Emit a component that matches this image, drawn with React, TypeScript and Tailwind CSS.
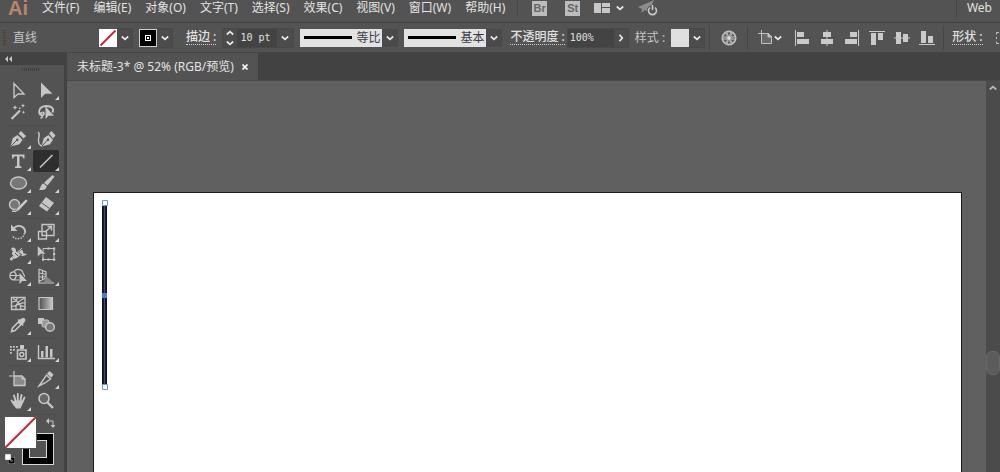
import type { ReactNode } from "react";

interface Tool {
  name: string;
  icon: ReactNode;
  more?: boolean;
  active?: boolean;
}

const menus = [
  "文件(F)",
  "编辑(E)",
  "对象(O)",
  "文字(T)",
  "选择(S)",
  "效果(C)",
  "视图(V)",
  "窗口(W)",
  "帮助(H)",
];

const line = { fill: "none", stroke: "currentColor", strokeWidth: 1.4 };

// Toolbox, top to bottom, grouped the way the separators split it
const toolGroups: Tool[][] = [
  [
    { name: "选择", icon: <path {...line} d="M6 3.5V17.500l4-3.500h6z" /> },
    { name: "直接选择", more: true, icon: <path d="M5 2.5V18l4.2-4.2h7.3z" /> },
    {
      name: "魔棒",
      icon: (
        <>
          <path d="M3.5 17L12 8.5" fill="none" stroke="currentColor" strokeWidth="2.2" />
          <path d="M7 3l.7 1.8 1.8.7-1.8.7L7 8l-.7-1.8-1.8-.7 1.8-.7zM15 1.500l.6 1.600 1.600.6-1.600.6-.6 1.600-.6-1.600-1.600-.6 1.600-.6zM15.500 8.500l.5 1.300 1.300.5-1.300.5-.5 1.300-.5-1.300-1.300-.5 1.300-.5zM11 5.500h1.500V7H11z" />
        </>
      ),
    },
    {
      name: "套索",
      icon: (
        <>
          <path {...line} strokeWidth={1.8} d="M6 13.500C1.500 12 2 4.500 10 4c6 0 8.500 3 6.500 6.500M6.500 10.500c-2 0-2.500 2.500-.5 2.800 2 0 2.500-2.300 1-3.300M6 13c1 2-.5 3-1.500 3" />
          <path d="M9.500 4.500V17l3-3.300h5.500z" />
        </>
      ),
    },
  ],
  [
    {
      name: "钢笔",
      more: true,
      icon: (
        <>
          <path d="M2.500 17.500l2.300-8.500 4.700-3 5 4.800-3 4.500zM10.500 4.500L13 2l5 5-2.500 2.500z" />
          <path d="M3 17L9 11" stroke="#535353" />
          <circle cx="9.300" cy="10.800" r="1.200" fill="#535353" />
        </>
      ),
    },
    {
      name: "曲率",
      icon: (
        <>
          <path d="M5.500 17.500l2.300-8.500 4.700-3 4.500 4.800-3 4.500zM13 4.500L15.500 2l4 4.500L17 9.500z" />
          <path {...line} d="M2 3c3 2 0 5 .5 9 .3 3 1.500 4.500 3.500 5" />
          <path d="M6 17L11.500 11" stroke="#535353" />
          <circle cx="12" cy="10.800" r="1.200" fill="#535353" />
        </>
      ),
    },
    {
      name: "文字",
      more: true,
      icon: <path d="M4 3.500h12.500V7.500H15.300C15 6 14.300 5.300 12.800 5.300H11.500V14c0 1.200.5 1.500 2 1.500V17H7v-1.500c1.500 0 2-.3 2-1.500V5.300H7.700C6.200 5.300 5.500 6 5.200 7.500H4z" />,
    },
    {
      name: "直线段",
      more: true,
      active: true,
      icon: <path {...line} strokeWidth={1.6} d="M4 16.500L16.500 4" />,
    },
    {
      name: "椭圆",
      more: true,
      icon: <ellipse cx="10.500" cy="10" rx="8" ry="6" fill="#777" stroke="currentColor" strokeWidth="1.400" />,
    },
    {
      name: "画笔",
      more: true,
      icon: (
        <>
          <path d="M16.500 2l2 1.800-7 8.700-3.500-2.800z" />
          <path d="M7.500 10.500l3.300 2.800c-.5 3.700-4.300 4.400-8 3.400 2-1 1.700-5.700 4.700-6.200z" />
        </>
      ),
    },
    {
      name: "Shaper",
      more: true,
      icon: (
        <>
          <circle cx="6.500" cy="9.500" r="5" fill="#777" stroke="currentColor" strokeWidth="1.400" />
          <path d="M18 4l2 2-9 9.500-4 2 1.600-4.300z" stroke="#535353" strokeWidth=".6" />
          <path {...line} d="M4 16.300h4" />
        </>
      ),
    },
    {
      name: "橡皮擦",
      more: true,
      icon: (
        <>
          <path d="M10 2l8 6-7 8.500L3 11z" />
          <path d="M6 8l7.500 5.500" stroke="#535353" />
        </>
      ),
    },
  ],
  [
    {
      name: "旋转",
      more: true,
      icon: (
        <>
          <path d="M3 2.500V9h6.500z" />
          <path {...line} strokeWidth={1.8} d="M6 6c5-4.500 12-1 11 5" />
          <path {...line} strokeWidth={1.600} strokeDasharray="1.500 1.200" d="M16.500 11c-.5 6-9 8-12.500 2.500" />
        </>
      ),
    },
    {
      name: "比例缩放",
      more: true,
      icon: (
        <>
          <path {...line} d="M6 2.500h12v11H6zM2.500 9.500h8v7.500h-8z" />
          <path {...line} d="M10 9l5-4M11.500 4.500h4v4" />
        </>
      ),
    },
    {
      name: "宽度",
      more: true,
      icon: (
        <>
          <path d="M3 5c2-3 5-1 5 1.500 0 2 2 3 4 .5 1-1.500 3-1 3 .5 0 2 1.500 2.500 4 2-2 3-5 3-7 1.500-2 3-5 4.500-8 3.500l2-3C4 11 3 9.500 5 7.500z" />
          <path {...line} strokeWidth={1} d="M2 15L14 4" />
          <circle cx="3.500" cy="15" r="1.500" />
          <path d="M7 9l3 3M11 9l3 2" stroke="#535353" />
        </>
      ),
    },
    {
      name: "自由变换",
      icon: (
        <>
          <path {...line} strokeWidth={1} d="M7 4.500h11v11H7z" />
          <path d="M17 3.500h2.200v2.200H17zM17 14.500h2.200v2.200H17zM6 14.500h2.200v2.200H6zM11.500 3.500h2v2h-2zM11.500 14.500h2v2h-2zM17 9h2.200v2H17z" />
          <path d="M1.500 1.500v11.500l3.300-3h5z" stroke="#535353" strokeWidth=".5" />
        </>
      ),
    },
    {
      name: "形状生成器",
      more: true,
      icon: (
        <>
          <path {...line} strokeWidth={1.200} d="M5 14C0 12 1.500 5.500 6 6c2-4 9-3 9 1.500 1.500 1 1.500 2 1.500 3.500M6 6c3 1 3 7-1 8h6M2.500 9.500h9" />
          <path d="M11.500 7v11l2.800-3h4.700z" />
        </>
      ),
    },
    {
      name: "透视网格",
      more: true,
      icon: (
        <>
          <path {...line} strokeWidth={1.200} d="M3 3v14h15M3 3l7 3v6L3 15.500M6.500 4.500V14M3 7l7 1.500M3 11l7-.5" />
          <path d="M10 10l7 6H8z" fill="#858585" />
        </>
      ),
    },
  ],
  [
    {
      name: "网格",
      icon: (
        <>
          <path {...line} d="M3.500 4.500h13.500v12h-13.500z" />
          <path {...line} strokeWidth={1.200} d="M3.500 9c4 0 5-1 6-4.500M3.500 13.500c6-.5 9-4 13-3.500M8 16.500c-1-4 1-8 8-11M13 16.500c0-4-2-8-8-11M12 12l5 2" />
        </>
      ),
    },
    {
      name: "渐变",
      icon: (
        <>
          <linearGradient id="gradientTool">
            <stop stopColor="#505050" />
            <stop offset="1" stopColor="#c8c8c8" />
          </linearGradient>
          <path d="M3 4.500h13.500v12H3z" fill="url(#gradientTool)" stroke="currentColor" strokeWidth="1.200" />
        </>
      ),
    },
    {
      name: "吸管",
      more: true,
      icon: (
        <>
          <path {...line} strokeWidth={1.600} d="M3.500 16.500l1-3.500 6-6 2.500 2.500-6 6z" />
          <path d="M9.500 5l1.500-1 1 .7c3-3.700 7.200-1 4.500 2.500l-1.500 1.500.7 1-1.200 1.300z" />
        </>
      ),
    },
    {
      name: "混合",
      icon: (
        <>
          <path d="M2 3h6v6H2z" />
          <rect x="6" y="5" width="7" height="7" rx="1.500" fill="#999" stroke="currentColor" />
          <circle cx="14" cy="12" r="4.300" fill="#777" stroke="currentColor" strokeWidth="1.500" />
        </>
      ),
    },
  ],
  [
    {
      name: "符号喷枪",
      more: true,
      icon: (
        <>
          <path {...line} strokeWidth={1.600} d="M9.500 8h8.500v9H9.500z" />
          <circle {...line} cx="13.800" cy="12.500" r="2" />
          <path d="M12 3h4v4h-4zM2 4h1.800v1.800H2zM5 4h1.800v1.800H5zM8 4h1.800v1.800H8zM2 7h1.800v1.800H2zM5 7h1.800v1.800H5zM2 10h1.800v1.800H2z" />
        </>
      ),
    },
    {
      name: "柱形图",
      more: true,
      icon: (
        <>
          <path {...line} d="M2.500 3v13.500H19" />
          <path d="M5 9h2.500v6.500H5zM9.500 4H12v11.500H9.500zM14 7h2.500v8.500H14z" />
        </>
      ),
    },
  ],
  [
    {
      name: "画板",
      icon: (
        <>
          <path {...line} strokeWidth={1.200} d="M6 2v5M1 7h4" />
          <path d="M6 7h8l3 3v6.500H6z" fill="#8a8a8a" stroke="currentColor" strokeWidth="1.400" />
          <path d="M13.500 6.500v4h4z" />
        </>
      ),
    },
    {
      name: "切片",
      more: true,
      icon: (
        <>
          <path {...line} d="M3 17l7.500-11 4 4L9 14z" />
          <path d="M11 4.500L13.500 2l4 3.500L15 9z" />
        </>
      ),
    },
    {
      name: "抓手",
      more: true,
      icon: (
        <>
          <path {...line} strokeWidth={1.900} strokeLinecap="round" d="M3.500 9.500l3 3.500M6 4.500l1.800 6M9.800 3v7M13.500 4l-1.200 6.500M16.500 6.500l-2.300 5" />
          <path d="M6.500 9.500h8.500c.5 3-1.500 5-2.500 8H8c-1-2-3.500-4-4.500-6.500z" />
        </>
      ),
    },
    {
      name: "缩放",
      icon: (
        <>
          <circle cx="8" cy="7.500" r="5" fill="#686868" stroke="currentColor" strokeWidth="1.600" />
          <path {...line} strokeWidth={2.400} d="M11.500 11.500l5.500 5.500" />
        </>
      ),
    },
  ],
];

const alignIcons = [
  { name: "水平左对齐", d: "M1 0h1v16H1zM3 2h7v5H3zM3 9h12v5H3z" },
  { name: "水平居中对齐", d: "M7.500 0h1v16h-1zM4 2h8v5H4zM2 9h12v5H2z" },
  { name: "水平右对齐", d: "M14 0h1v16h-1zM6 2h7v5H6zM1 9h12v5H1z" },
  { name: "垂直顶对齐", d: "M0 1h16v1H0zM2 3h5v12H2zM9 3h5v7H9z" },
  { name: "垂直居中对齐", d: "M0 7.500h16v1H0zM2 2h5v12H2zM9 4h5v8H9z" },
  { name: "垂直底对齐", d: "M0 14h16v1H0zM2 1h5v12H2zM9 6h5v7H9z" },
];

const Chevron = () => (
  <svg className="h-2 w-2" viewBox="0 0 8 8" fill="none" stroke="#e8e8e8" strokeWidth="1.700">
    <path d="M.8 2.500L4 5.300l3.200-2.800" />
  </svg>
);

const DropButton = ({ label }: { label: string }) => (
  <button
    aria-label={label}
    className="flex h-5 w-4 items-center justify-center border border-l-0 border-[#484848] bg-[#4c4c4c]"
  >
    <Chevron />
  </button>
);

const Divider = () => <span className="h-6 w-px shrink-0 bg-[#464646]" />;

const StrokeSelect = ({ label, value }: { label: string; value: string }) => (
  <div className="relative flex items-center">
    <select
      aria-label={label}
      className="h-[18px] w-[98px] appearance-none bg-[linear-gradient(to_right,#e2e2e2_82px,#4a4a4a_82px)] pl-14 text-xs leading-4 text-[#3c3c46] outline-none"
    >
      <option>{value}</option>
    </select>
    <span className="pointer-events-none absolute left-1 h-[3px] w-12 bg-black" />
    <span className="pointer-events-none absolute right-1">
      <Chevron />
    </span>
  </div>
);

const MenuBar = () => (
  <header className="flex h-[23px] shrink-0 items-start border-b border-[#414141] text-[#e2e2e2]">
    <span className="ml-2 w-[34px] font-['Liberation_Sans'] text-xl leading-4 font-bold text-[#ba8467]">Ai</span>
    <nav className="flex gap-3.5">
      {menus.map((menu) => (
        <button key={menu} className="leading-4 whitespace-nowrap">
          {menu}
        </button>
      ))}
    </nav>
    <span className="ml-3 h-4 w-px bg-[#484848]" />
    <div className="ml-3.5 flex items-start font-['Liberation_Sans'] text-[11px]">
      <button className="mt-px mr-[18px] size-[15px] bg-[#bdbdbd] text-center leading-[15px] font-bold text-[#666]">Br</button>
      <button className="mt-px mr-3.5 size-[15px] bg-[#bdbdbd] text-center leading-[15px] font-bold text-[#666]">St</button>
      <button aria-label="排列文档" className="mr-3.5 flex h-[15px] items-center gap-1.5">
        <svg className="h-3 w-4" viewBox="0 0 16 12" fill="#c8c8c8">
          <path d="M0 1h7v10H0zM8 1h8v4H8zM8 6h8v5H8z" />
        </svg>
        <Chevron />
      </button>
      <button aria-label="共享">
        <svg className="h-4 w-5" viewBox="0 0 20 16" fill="none">
          <path d="M16 0L0 7l4 2-.5 4L7 10l4 2z" fill="#8c8c8c" />
          <circle cx="14.500" cy="10.500" r="5.500" fill="#535353" />
          <path d="M12 7.500a4 4 0 1 0 5 0M14.500 5v5" stroke="#c8c8c8" strokeWidth="1.600" />
        </svg>
      </button>
    </div>
    <span className="ml-auto h-[18px] w-px bg-[#464646]" />
    <button className="mr-2 ml-2.5 leading-4">Web</button>
  </header>
);

const ControlBar = () => (
  <div className="flex h-[30px] shrink-0 items-center overflow-hidden border-b border-[#454545] whitespace-nowrap text-[#e0e0e0]">
    <span className="ml-[3px] h-4 w-[3px] shrink-0 bg-[repeating-linear-gradient(#444_0_1px,#5a4d4a_1px_2px)]" />
    <span className="ml-[7px] w-[86px] shrink-0 text-[#c4c4c4]">直线</span>

    <div className="flex w-10 shrink-0 items-center">
      <button aria-label="填色" className="size-[18px] bg-white">
        <svg viewBox="0 0 18 18" stroke="#c8202c" strokeWidth="1.800">
          <path d="M1.500 16.500l15-15" />
        </svg>
      </button>
      <DropButton label="填色菜单" />
    </div>
    <div className="flex w-[47px] shrink-0 items-center">
      <button aria-label="描边颜色" className="flex size-[18px] items-center justify-center border border-[#ccc] bg-black">
        <span className="flex size-1.5 items-center justify-center border border-white">
          <span className="size-0.5 bg-white" />
        </span>
      </button>
      <DropButton label="描边颜色菜单" />
    </div>

    <label htmlFor="stroke" className="mr-1.5 border-b border-dotted border-[#ccc] leading-[14px] font-medium">
      描边 :
    </label>
    <div className="mr-1.5 flex h-5 shrink-0 items-center border border-[#484848] bg-[#4c4c4c]">
      <div className="flex w-3.5 flex-col items-center gap-0.5">
        <button aria-label="增加" className="rotate-180">
          <Chevron />
        </button>
        <button aria-label="减少">
          <Chevron />
        </button>
      </div>
      <input
        id="stroke"
        defaultValue="10 pt"
        className="h-[18px] w-10 bg-[#434343] pl-[3px] font-['DejaVu_Sans_Mono'] text-[10px] outline-none"
      />
      <button aria-label="描边粗细" className="flex w-4 items-center justify-center">
        <Chevron />
      </button>
    </div>

    <div className="mr-2 flex shrink-0 gap-1.5">
      <StrokeSelect label="变量宽度配置文件" value="等比" />
      <StrokeSelect label="画笔定义" value="基本" />
    </div>

    <label htmlFor="opacity" className="mr-0.5 border-b border-dotted border-[#ccc] leading-[14px] font-medium">
      不透明度 :
    </label>
    <div className="mr-1.5 flex h-5 shrink-0 items-center border border-[#484848] bg-[#4c4c4c]">
      <input
        id="opacity"
        defaultValue="100%"
        className="h-[18px] w-[46px] bg-[#434343] pl-0.5 font-['DejaVu_Sans_Mono'] text-[10px] outline-none"
      />
      <button aria-label="不透明度滑块" className="flex w-3.5 -rotate-90 items-center justify-center">
        <Chevron />
      </button>
    </div>

    <span className="mr-1.5 text-[#c4c4c4]">样式 :</span>
    <div className="mr-1 flex shrink-0 items-center">
      <button aria-label="图形样式" className="size-[18px] bg-[#e0e0e0]" />
      <DropButton label="图形样式菜单" />
    </div>
    <Divider />
    <button aria-label="重新着色图稿" className="mr-2.5 ml-[11px] shrink-0">
      <svg className="size-4" viewBox="0 0 16 16" fill="#a8a8a8">
        <circle cx="8" cy="8" r="7" stroke="#d0d0d0" />
        <path d="M8 2v12M2 8h12M4 4l8 8M12 4l-8 8" stroke="#777" />
        <circle cx="8" cy="8" r="2" fill="#d8d8d8" />
        <g fill="#555">
          <circle cx="8" cy="3.500" r="1" />
          <circle cx="12" cy="5.500" r="1" />
          <circle cx="12" cy="10.500" r="1" />
          <circle cx="8" cy="12.500" r="1" />
          <circle cx="4" cy="10.500" r="1" />
          <circle cx="4" cy="5.500" r="1" />
        </g>
      </svg>
    </button>
    <Divider />
    <button aria-label="对齐画板" className="mr-3 ml-2.5 flex shrink-0 items-center">
      <svg className="size-4" viewBox="0 0 16 16" fill="none" stroke="#c0c0c0">
        <path d="M3.500 0v4M0 3.500h4" />
        <path d="M3.500 3.500h7l3 3v7h-10z" fill="#6a6a6a" />
        <path d="M10 3v4h4z" fill="#c0c0c0" />
      </svg>
      <Chevron />
    </button>
    <div className="flex shrink-0 gap-[9px]">
      {alignIcons.map((icon) => (
        <button key={icon.name} aria-label={icon.name}>
          <svg className="size-4" viewBox="0 0 16 16" fill="#cacaca">
            <path d={icon.d} />
          </svg>
        </button>
      ))}
    </div>
    <span className="mx-2 h-6 w-px shrink-0 bg-[#464646]" />
    <button className="mr-3 border-b border-dotted border-[#ccc] leading-[14px] font-medium">形状 :</button>
    <svg className="size-4 shrink-0" viewBox="0 0 16 16" fill="none" stroke="#c0c0c0">
      <path d="M4 2.500H1.500v2M1.500 7v2M1.500 11.500v2H4M5.500 2.500H12M5.500 13.500H12M5 8h8" />
    </svg>
  </div>
);

const ToolButton = ({ tool }: { tool: Tool }) => (
  <button
    aria-label={tool.name}
    className={`relative flex h-[22px] w-[26px] items-center justify-center rounded-xs text-[#c6c6c6] ${
      tool.active ? "bg-[#2e2e2e]" : ""
    }`}
  >
    <svg className="size-5" viewBox="0 0 20 20" fill="currentColor">
      {tool.icon}
    </svg>
    {tool.more && (
      <svg className="absolute right-0 bottom-px size-1" viewBox="0 0 4 4" fill="#d4d4d4">
        <path d="M4 0v4H0z" />
      </svg>
    )}
  </button>
);

const Toolbox = () => (
  <aside className="w-[67px] shrink-0 border-r-[3px] border-[#424242] bg-[#535353]">
    <button aria-label="折叠" className="flex h-3 w-full items-center bg-[#424242] pl-[5px]">
      <svg className="h-1.5 w-[7px]" viewBox="0 0 7 6" fill="#c8c8c8">
        <path d="M3 0v6L0 3zM7 0v6L4 3z" />
      </svg>
    </button>
    <div className="ml-[22px] mt-[3px] mb-2 h-[3px] w-[18px] bg-[repeating-linear-gradient(90deg,#404040_0_1px,#535353_1px_2px)]" />
    <div className="flex flex-col gap-0.5 pl-[5px]">
      {toolGroups.map((group, i) => (
        <div key={i} className="grid w-[54px] grid-cols-2 gap-x-0.5 border-b border-[#4e4e4e] pb-0.5">
          {group.map((tool) => (
            <ToolButton key={tool.name} tool={tool} />
          ))}
        </div>
      ))}
    </div>

    {/* Fill sits over the stroke swatch */}
    <div className="relative mt-px ml-1 h-[52px] w-14">
      <button aria-label="描边" className="absolute top-[17px] left-[18px] size-8 border border-[#d8d8d8] bg-black p-1.5">
        <span className="block size-full border border-[#d8d8d8] bg-[#535353]" />
      </button>
      <button aria-label="填色" className="absolute top-0 left-0 size-[33px] border border-[#555] bg-white">
        <svg viewBox="0 0 31 31" stroke="#c8283a" strokeWidth="2">
          <path d="M0 31L31 0" />
        </svg>
      </button>
      <button aria-label="互换填色和描边" className="absolute top-0.5 right-1">
        <svg className="size-2.5" viewBox="0 0 10 10" fill="#c6c6c6">
          <path d="M0 3l3-3v6zM7 10L4.500 7h5z" />
          <path d="M3 3h4v4" fill="none" stroke="#c6c6c6" />
        </svg>
      </button>
      <button aria-label="默认填色和描边" className="absolute bottom-1 left-px">
        <svg className="size-2.5" viewBox="0 0 10 10">
          <path d="M4.500 4.500h4v4h-4z" fill="none" stroke="#aaa" strokeWidth="3" />
          <path d="M4.500 4.500h4v4h-4z" fill="none" stroke="#000" strokeWidth="2" />
          <path d="M.5.500h5v5h-5z" fill="#fff" stroke="#ddd" />
        </svg>
      </button>
    </div>
  </aside>
);

const Workspace = () => (
  <main className="flex min-w-0 flex-1 flex-col">
    <div className="flex h-[27px] shrink-0 bg-[#424242]">
      <div className="flex items-center gap-2 bg-[#535353] px-2.5 whitespace-nowrap text-[#e4e4e4]">
        未标题-3* @ 52% (RGB/预览)
        <button aria-label="关闭">
          <svg className="size-1.5" viewBox="0 0 6 6" stroke="#f0f0f0" strokeWidth="1.800">
            <path d="M.5.500l5 5M5.500.500l-5 5" />
          </svg>
        </button>
      </div>
    </div>
    <div className="flex min-h-0 flex-1 border-t border-[#4a4a4a]">
      <div className="flex flex-1 bg-[#606060] pt-[111px] pr-6 pl-[26px]">
        <div className="relative flex-1 border border-b-0 border-[#1c1c1c] bg-white">
          {/* Selected line segment with its anchor points */}
          <svg className="absolute top-1.5 left-1.5 h-48 w-3" viewBox="0 0 12 192" fill="none">
            <path d="M4.500 7v179" stroke="#10101f" strokeWidth="5" />
            <path d="M4.500 7v179" stroke="#43477c" strokeWidth="1.400" />
            <path d="M2.500 1.500h5v5h-5zM2.500 185.500h5v5h-5z" fill="#fff" stroke="#6a9bd0" />
            <path d="M2 94h5v5H2z" fill="#4a7bdc" />
          </svg>
        </div>
      </div>
      <div className="relative w-3.5 shrink-0 bg-[#4b4b4b]">
        <button aria-label="向上滚动" className="flex h-3.5 w-full rotate-180 items-center justify-center opacity-70">
          <Chevron />
        </button>
        <div className="absolute top-[69%] h-6 w-3.5 rounded-md border border-[#686868] bg-[#5c5c5c]" />
      </div>
    </div>
  </main>
);

const App = () => {
  return (
    <div className="flex h-screen flex-col overflow-hidden bg-[#535353] font-['Noto_Sans','Noto_Sans_CJK_SC',sans-serif] text-xs">
      <MenuBar />
      <ControlBar />
      <div className="flex min-h-0 flex-1">
        <Toolbox />
        <Workspace />
      </div>
    </div>
  );
};

export default App;
